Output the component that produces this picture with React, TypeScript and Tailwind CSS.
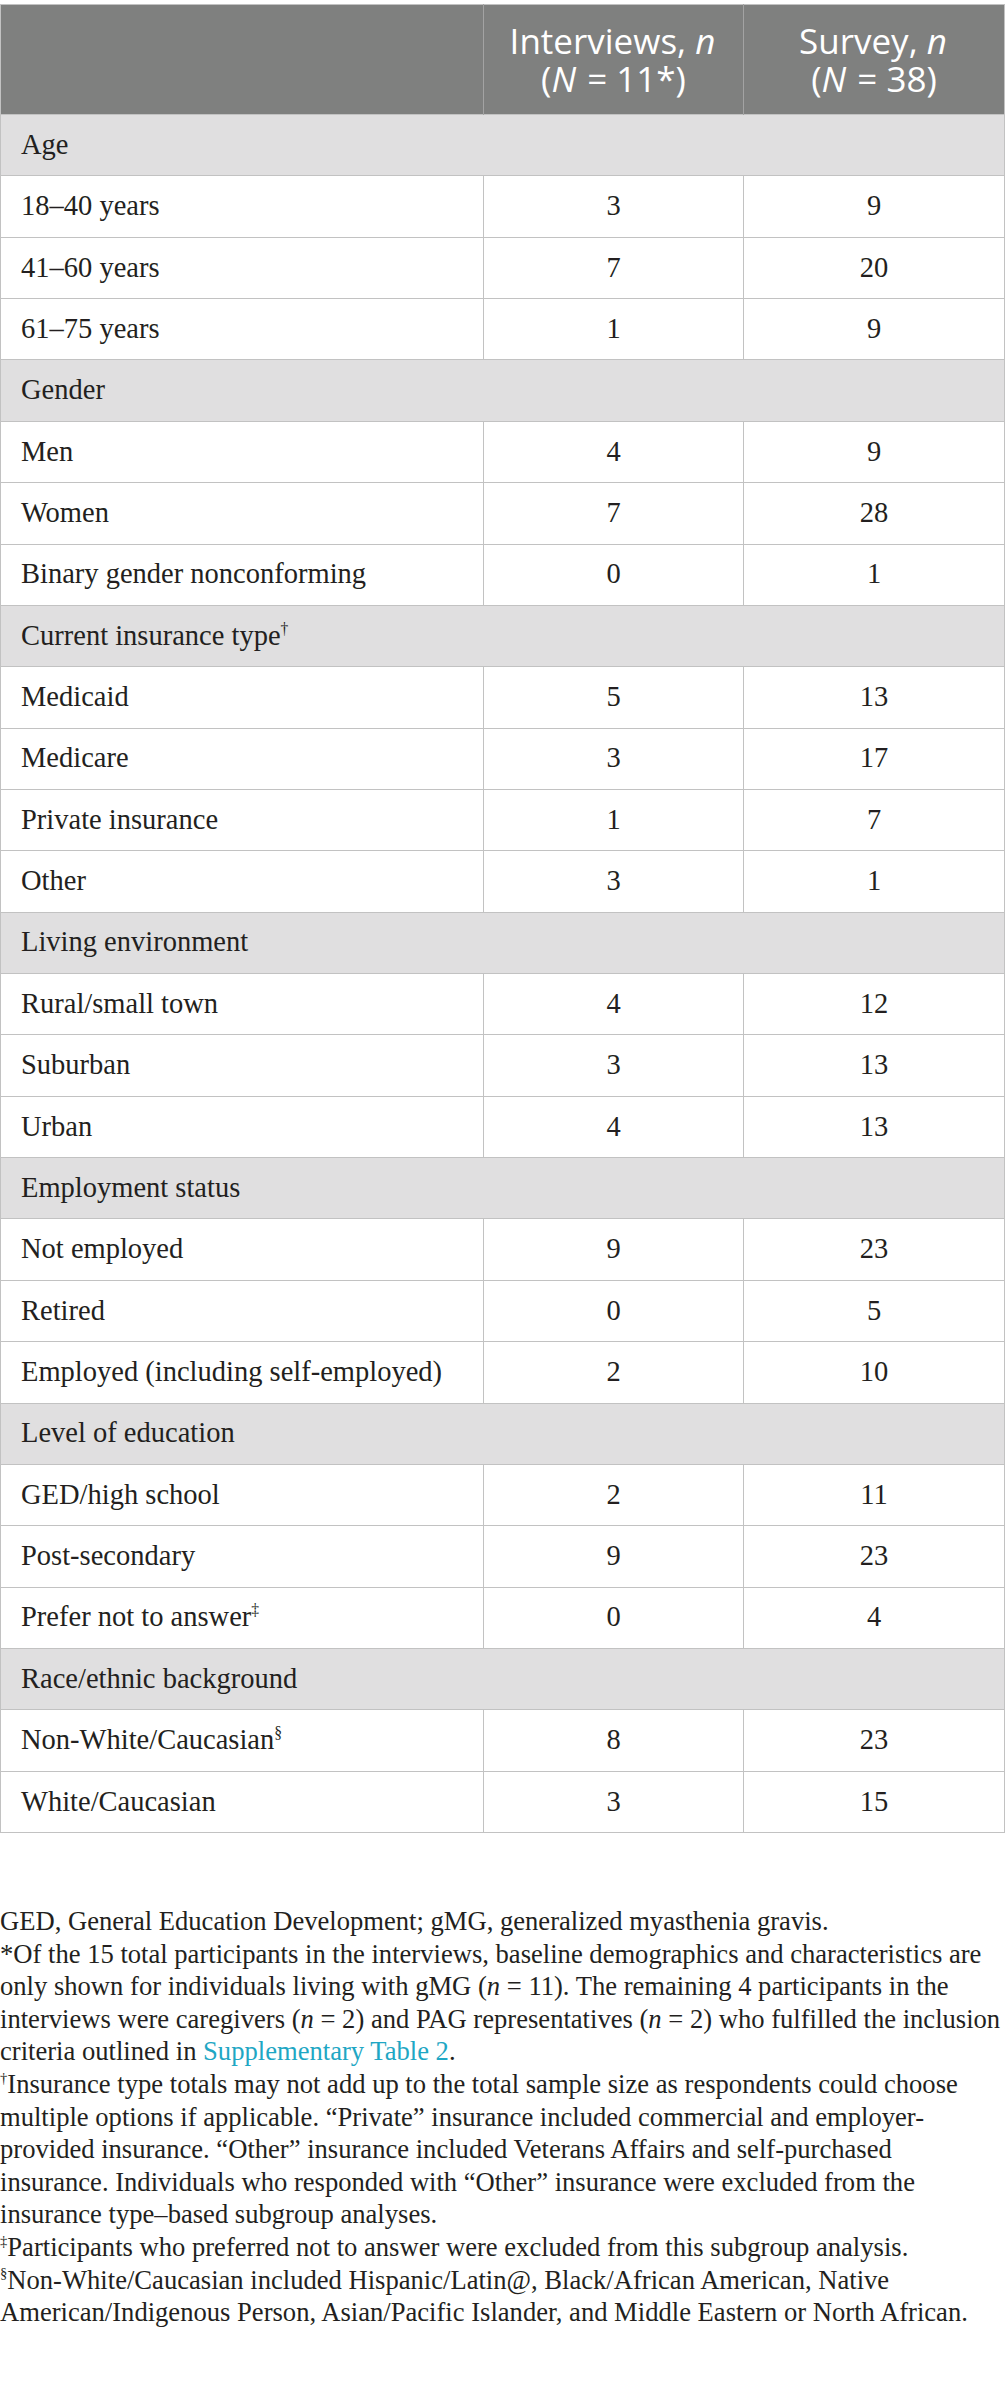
import React from 'react';

type Row = { label: React.ReactNode; a?: string; b?: string; section?: boolean };

const Sup: React.FC<{ children: React.ReactNode }> = ({ children }) => (
  <span className="text-[0.55em] relative -top-[0.7em] align-baseline leading-none">{children}</span>
);

const rows: Row[] = [
  { label: 'Age', section: true },
  { label: '18–40 years', a: '3', b: '9' },
  { label: '41–60 years', a: '7', b: '20' },
  { label: '61–75 years', a: '1', b: '9' },
  { label: 'Gender', section: true },
  { label: 'Men', a: '4', b: '9' },
  { label: 'Women', a: '7', b: '28' },
  { label: 'Binary gender nonconforming', a: '0', b: '1' },
  { label: <>Current insurance type<Sup>†</Sup></>, section: true },
  { label: 'Medicaid', a: '5', b: '13' },
  { label: 'Medicare', a: '3', b: '17' },
  { label: 'Private insurance', a: '1', b: '7' },
  { label: 'Other', a: '3', b: '1' },
  { label: 'Living environment', section: true },
  { label: 'Rural/small town', a: '4', b: '12' },
  { label: 'Suburban', a: '3', b: '13' },
  { label: 'Urban', a: '4', b: '13' },
  { label: 'Employment status', section: true },
  { label: 'Not employed', a: '9', b: '23' },
  { label: 'Retired', a: '0', b: '5' },
  { label: 'Employed (including self-employed)', a: '2', b: '10' },
  { label: 'Level of education', section: true },
  { label: 'GED/high school', a: '2', b: '11' },
  { label: 'Post-secondary', a: '9', b: '23' },
  { label: <>Prefer not to answer<Sup>‡</Sup></>, a: '0', b: '4' },
  { label: 'Race/ethnic background', section: true },
  { label: <>Non-White/Caucasian<Sup>§</Sup></>, a: '8', b: '23' },
  { label: 'White/Caucasian', a: '3', b: '15' },
];

const serif = "font-['Liberation_Serif','Times_New_Roman',serif]";

export default function App() {
  return (
    <div className={`bg-white w-[1005px] min-h-[2385px] text-[#231f20] ${serif}`}>
      <table className="mt-1 w-[1004px] border-collapse table-fixed border border-[#c2c2c2]">
        <colgroup>
          <col className="w-[483px]" />
          <col className="w-[260px]" />
          <col className="w-[261px]" />
        </colgroup>
        <thead className="bg-[#7f807f] text-white font-['Open_Sans','Noto_Sans',sans-serif] text-[35px] leading-[38px]">
          <tr className="h-[110px]">
            <th className="border-r border-[#a3a3a3]"></th>
            <th className="border-r border-[#a3a3a3] font-normal text-center">
              <div>Interviews, <i className="pr-0.5">n</i></div>
              <div>(<i className="pr-0.5">N</i> = 11*)</div>
            </th>
            <th className="font-normal text-center">
              <div>Survey, <i className="pr-0.5">n</i></div>
              <div>(<i className="pr-0.5">N</i> = 38)</div>
            </th>
          </tr>
        </thead>
        <tbody className="text-[28.5px]">
          {rows.map((r, i) =>
            r.section ? (
              <tr key={i} className="h-[61.36px] bg-[#e0dfe0] border-t border-[#c2c2c2]">
                <td colSpan={3} className="pl-5 text-left">{r.label}</td>
              </tr>
            ) : (
              <tr key={i} className="h-[61.36px] border-t border-[#c2c2c2]">
                <td className="pl-5 border-r border-[#c2c2c2]">{r.label}</td>
                <td className="text-center border-r border-[#c2c2c2]">{r.a}</td>
                <td className="text-center">{r.b}</td>
              </tr>
            )
          )}
        </tbody>
      </table>

      <div className="mt-[72px] text-[26.6px] leading-[32.6px] whitespace-nowrap">
        <p>GED, General Education Development; gMG, generalized myasthenia gravis.</p>
        <p>
          *Of the 15 total participants in the interviews, baseline demographics and characteristics are
          <br />
          only shown for individuals living with gMG (<i>n</i> = 11). The remaining 4 participants in the
          <br />
          interviews were caregivers (<i>n</i> = 2) and PAG representatives (<i>n</i> = 2) who fulfilled the inclusion
          <br />
          criteria outlined in <a className="text-[#1fa7c4]">Supplementary Table 2</a>.
        </p>
        <p>
          <Sup>†</Sup>Insurance type totals may not add up to the total sample size as respondents could choose
          <br />
          multiple options if applicable. “Private” insurance included commercial and employer-
          <br />
          provided insurance. “Other” insurance included Veterans Affairs and self-purchased
          <br />
          insurance. Individuals who responded with “Other” insurance were excluded from the
          <br />
          insurance type–based subgroup analyses.
        </p>
        <p>
          <Sup>‡</Sup>Participants who preferred not to answer were excluded from this subgroup analysis.
        </p>
        <p>
          <Sup>§</Sup>Non-White/Caucasian included Hispanic/Latin@, Black/African American, Native
          <br />
          American/Indigenous Person, Asian/Pacific Islander, and Middle Eastern or North African.
        </p>
      </div>
    </div>
  );
}
